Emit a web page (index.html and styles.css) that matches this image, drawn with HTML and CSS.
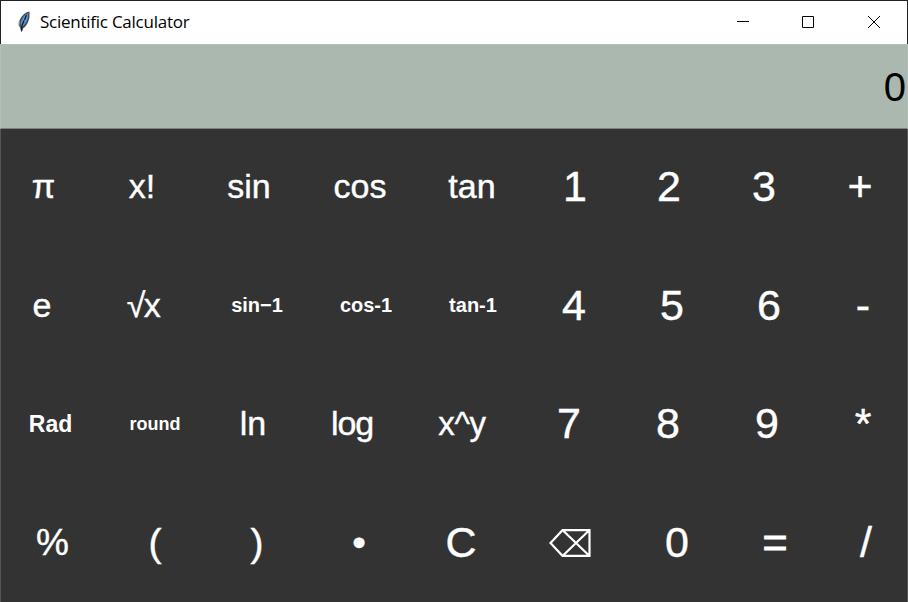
FILE: index.html
```html
<!DOCTYPE html>
<html lang="en">
<head>
<meta charset="utf-8">
<title>Scientific Calculator</title>
<link rel="stylesheet" href="styles.css">
</head>
<body>
<div class="window">
  <header class="titlebar">
    <svg class="feather" width="14" height="22" viewBox="0 0 14 22">
      <path d="M12.3 .5C8 1.5 4.5 4.5 2.6 9C1.6 12 1.6 15 3.2 17L4.4 21.5L6 17.5C9.5 15.5 12 10.5 12.6 5Z" fill="#4b4b4d"/>
      <path d="M10.8 2.4C7.5 3.5 4.6 7.5 3.6 12.5L4.6 16C8 14 10.8 9.5 11.2 5Z" fill="#5296df"/>
      <path d="M9.5 4L7.5 9M7 9.5L5 14.5L4.6 20" fill="none" stroke="#101b2a" stroke-width="1.3"/>
      <path d="M12.5 1V7M2.2 10L1.8 15" stroke="#b0aaa2" fill="none"/>
    </svg>
    <h1 class="title">Scientific Calculator</h1>
    <div class="controls">
      <svg width="12" height="12" viewBox="0 0 12 12"><path d="M0 5.5H12"/></svg>
      <svg width="12" height="12" viewBox="0 0 12 12"><path d="M.5 .5H11.5V11.5H.5Z"/></svg>
      <svg width="12" height="12" viewBox="0 0 12 12"><path d="M0 0L12 12M12 0L0 12"/></svg>
    </div>
  </header>
  <output class="display">0</output>
  <main class="keypad">
    <div class="row row-1">
      <button class="fn">π</button><button class="fn">x!</button><button class="fn">sin</button><button class="fn">cos</button><button class="fn">tan</button><button>1</button><button>2</button><button>3</button><button>+</button>
    </div>
    <div class="row row-2">
      <button class="fn">e</button><button class="fn root">√x</button><button class="inverse">sin−1</button><button class="inverse">cos-1</button><button class="inverse">tan-1</button><button>4</button><button>5</button><button>6</button><button>-</button>
    </div>
    <div class="row row-3">
      <button class="mode">Rad</button><button class="round">round</button><button class="fn">ln</button><button class="fn tight">log</button><button class="fn power">x^y</button><button>7</button><button>8</button><button>9</button><button>*</button>
    </div>
    <div class="row row-4">
      <button class="symbol percent">%</button><button class="symbol">(</button><button class="symbol">)</button><button class="symbol">•</button><button>C</button><button class="erase"><svg width="42" height="28" viewBox="0 0 42 28"><path d="M1.5 14L13.5 1.2H40.5V26.8H13.5ZM14.5 2L39.5 26M39.5 2L14.5 26"/></svg></button><button>0</button><button class="equals">=</button><button>/</button>
    </div>
  </main>
</div>
</body>
</html>
```

FILE: styles.css
```css
* { box-sizing: border-box; }

body {
  margin: 0;
  overflow: hidden;
  font-family: "Liberation Sans", Arial, sans-serif;
}

.window {
  width: 908px;
  height: 602px;
  display: flex;
  flex-direction: column;
  background: #333;
}

.titlebar {
  height: 44px;
  flex: none;
  display: flex;
  align-items: center;
  padding-left: 16px;
  padding-right: 27px;
  padding-bottom: 1px;
  background: #fff;
  border: 1px solid #232125;
  border-bottom: 0;
}

.feather { margin-top: -1px; }

.title {
  margin: 0 0 0 9px;
  font: 400 17px/22px "Open Sans", "Noto Sans", sans-serif;
  letter-spacing: -0.25px;
  color: #000;
}

.controls {
  display: flex;
  gap: 54px;
  margin-left: auto;
}

.controls svg:first-child { margin-right: -1px; }

.controls path {
  fill: none;
  stroke: #000;
  stroke-width: 1;
}

.display {
  height: 85px;
  flex: none;
  display: flex;
  align-items: center;
  justify-content: flex-end;
  padding-top: 2px;
  padding-right: 1px;
  background: #aab8af;
  border: 1px solid #b5bfb8;
  border-bottom-color: #7a827d;
  font-size: 40px;
  color: #000;
}

.keypad {
  flex: 1;
  display: grid;
  grid-template-rows: repeat(4, 118.5px);
  align-content: start;
  border: 1px solid #555;
  border-top: 0;
}

.row { display: grid; }
.row-1 { grid-template-columns: 85px 112px 102px 120px 104px 102px 86px 104px 88px; }
.row-2 { grid-template-columns: 82px 122px 104px 114px 100px 102px 94px 100px 88px; }
.row-3 { grid-template-columns: 99px 110px 86px 112px 108px 106px 92px 106px 86px; }
.row-4 { grid-template-columns: 103px 102px 102px 102px 102px 116px 98px 98px 84px; }

button {
  display: flex;
  align-items: center;
  justify-content: center;
  padding: 0 0 3px;
  border: 0;
  background: none;
  color: #fff;
  font-family: inherit;
  font-size: 43px;
  -webkit-text-stroke: 0.4px #fff;
}

.fn { font-size: 34px; }
.tight { letter-spacing: -1.2px; }
.root { letter-spacing: -1.5px; padding-right: 2px; }
.power { font-size: 33px; letter-spacing: -0.3px; }
.inverse { font-size: 20px; font-weight: 700; }
.mode { font-size: 23px; font-weight: 700; }
.round { font-size: 18px; font-weight: 700; }
.inverse, .mode, .round { -webkit-text-stroke: 0; }
.mode, .round { padding-bottom: 2px; }
.symbol { font-size: 39px; padding-bottom: 2px; }
.percent { font-size: 37px; }
.equals { -webkit-text-stroke: 1px #fff; }
.erase { padding-bottom: 2px; }

.erase path {
  fill: none;
  stroke: #fff;
  stroke-width: 2.2;
}
```
